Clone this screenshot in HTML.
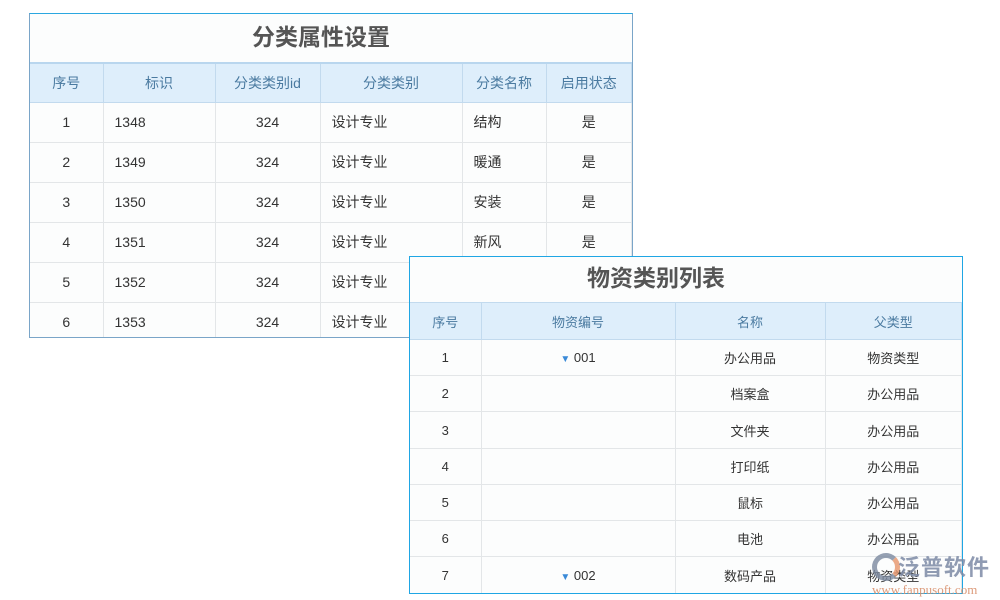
<!DOCTYPE html>
<html><head><meta charset="utf-8"><style>
body{margin:0;width:1000px;height:600px;background:#fff;position:relative;overflow:hidden;font-family:"Liberation Sans","Noto Sans CJK SC",sans-serif;font-size:14px;color:#333}
.t{position:absolute;background:#fcfdfd;box-sizing:border-box;overflow:hidden}
.ttl{text-align:center;font-weight:bold;font-size:23px;color:#555;background:#fcfdfd;box-sizing:border-box}
table{border-collapse:collapse;width:100%;table-layout:fixed}
td{border:1px solid #e3e6e8;padding:0;text-align:center;white-space:nowrap;overflow:hidden}
tr.h td{background:#deeefb;color:#4a7aa0;border-color:#c2daee}
td.l{text-align:left;padding-left:11px}
</style></head><body>
<div class="t" style="left:29px;top:13px;width:604px;height:325px;border:1px solid #7aa5c8;border-top-color:#2aa7e0">
<div class="ttl" style="height:48px;line-height:46px;padding-right:20px">分类属性设置</div>
<table style="border-top:2px solid #b9d6ee">
<colgroup><col style="width:73px"><col style="width:112px"><col style="width:105px"><col style="width:142px"><col style="width:84px"><col></colgroup>
<tr class="h" style="height:39px"><td style="border-left:0">序号</td><td>标识</td><td>分类类别id</td><td>分类类别</td><td>分类名称</td><td>启用状态</td></tr>
<tr style="height:40px"><td style="border-left:0">1</td><td class="l">1348</td><td>324</td><td class="l">设计专业</td><td class="l">结构</td><td>是</td></tr>
<tr style="height:40px"><td style="border-left:0">2</td><td class="l">1349</td><td>324</td><td class="l">设计专业</td><td class="l">暖通</td><td>是</td></tr>
<tr style="height:40px"><td style="border-left:0">3</td><td class="l">1350</td><td>324</td><td class="l">设计专业</td><td class="l">安装</td><td>是</td></tr>
<tr style="height:40px"><td style="border-left:0">4</td><td class="l">1351</td><td>324</td><td class="l">设计专业</td><td class="l">新风</td><td>是</td></tr>
<tr style="height:40px"><td style="border-left:0">5</td><td class="l">1352</td><td>324</td><td class="l">设计专业</td><td class="l">暖通</td><td>是</td></tr>
<tr style="height:40px"><td style="border-left:0">6</td><td class="l">1353</td><td>324</td><td class="l">设计专业</td><td class="l">暖通</td><td>是</td></tr>
</table></div>

<div class="t" style="left:409px;top:256px;width:554px;height:338px;border:1px solid #1fa6e4">
<div class="ttl" style="height:45px;line-height:43px;padding-right:60px">物资类别列表</div>
<table style="border-top:1px solid #8ec3ea;font-size:13px">
<colgroup><col style="width:71px"><col style="width:194px"><col style="width:150px"><col></colgroup>
<tr class="h" style="height:37px"><td style="border-left:0">序号</td><td>物资编号</td><td>名称</td><td>父类型</td></tr>
<tr style="height:36px"><td style="border-left:0">1</td><td><span style="color:#3a8ad8;font-size:10px">▼</span> 001</td><td>办公用品</td><td>物资类型</td></tr>
<tr style="height:36px"><td style="border-left:0">2</td><td></td><td>档案盒</td><td>办公用品</td></tr>
<tr style="height:37px"><td style="border-left:0">3</td><td></td><td>文件夹</td><td>办公用品</td></tr>
<tr style="height:36px"><td style="border-left:0">4</td><td></td><td>打印纸</td><td>办公用品</td></tr>
<tr style="height:36px"><td style="border-left:0">5</td><td></td><td>鼠标</td><td>办公用品</td></tr>
<tr style="height:36px"><td style="border-left:0">6</td><td></td><td>电池</td><td>办公用品</td></tr>
<tr style="height:37px"><td style="border-left:0">7</td><td><span style="color:#3a8ad8;font-size:10px">▼</span> 002</td><td>数码产品</td><td>物资类型</td></tr>
</table></div>

<div style="position:absolute;left:872px;top:553px;width:28px;height:28px;border-radius:50%;border:5px solid #7c8aa0;border-right-color:#e8956a;box-sizing:border-box;opacity:.8"></div>
<div style="position:absolute;left:898px;top:550px;font-size:22px;font-weight:bold;color:#7d8aa6;opacity:.85;letter-spacing:1px">泛普软件</div>
<div style="position:absolute;left:872px;top:582px;font-size:13px;color:#d9906c;font-family:'Liberation Serif',serif;opacity:.9">www.fanpusoft.com</div>
</body></html>
